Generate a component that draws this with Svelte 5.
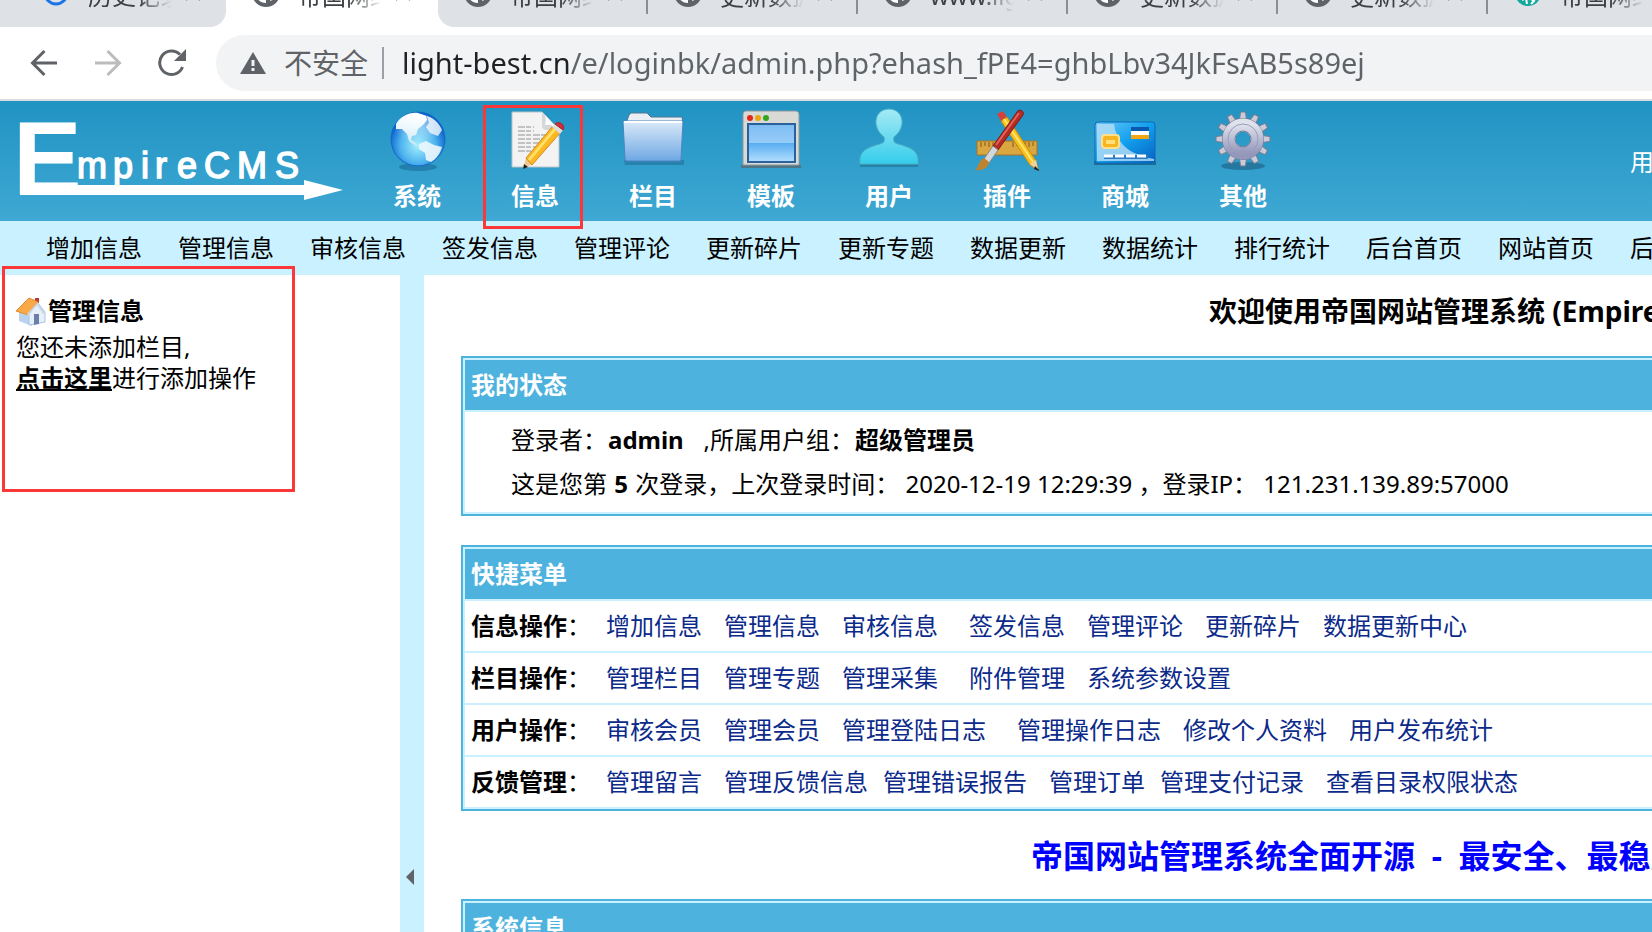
<script>
  const tabs = [
    { title: '历史记录', icon: 'history' },
    { title: '帝国网络', icon: 'globe', active: true },
    { title: '帝国网络', icon: 'globe' },
    { title: '更新数据', icon: 'globe' },
    { title: 'www.light', icon: 'globe' },
    { title: '更新数据', icon: 'globe' },
    { title: '更新数据', icon: 'globe' },
    { title: '帝国网络', icon: 'teal' }
  ]

  const menu = [
    { id: 'system', label: '系统' },
    { id: 'info', label: '信息' },
    { id: 'column', label: '栏目' },
    { id: 'template', label: '模板' },
    { id: 'user', label: '用户' },
    { id: 'plugin', label: '插件' },
    { id: 'shop', label: '商城' },
    { id: 'other', label: '其他' }
  ]

  const subnav = [
    '增加信息', '管理信息', '审核信息', '签发信息', '管理评论', '更新碎片', '更新专题',
    '数据更新', '数据统计', '排行统计', '后台首页', '网站首页', '后台地图'
  ]

  // gap says how far a link stands from the one before it
  const quick = [
    {
      name: '信息操作',
      links: [
        { text: '增加信息' }, { text: '管理信息' }, { text: '审核信息' },
        { text: '签发信息', gap: 'far' }, { text: '管理评论' }, { text: '更新碎片' },
        { text: '数据更新中心' }
      ]
    },
    {
      name: '栏目操作',
      links: [
        { text: '管理栏目' }, { text: '管理专题' }, { text: '管理采集' },
        { text: '附件管理', gap: 'far' }, { text: '系统参数设置' }
      ]
    },
    {
      name: '用户操作',
      links: [
        { text: '审核会员' }, { text: '管理会员' }, { text: '管理登陆日志' },
        { text: '管理操作日志', gap: 'far' }, { text: '修改个人资料' }, { text: '用户发布统计' }
      ]
    },
    {
      name: '反馈管理',
      links: [
        { text: '管理留言' }, { text: '管理反馈信息' }, { text: '管理错误报告', gap: 'near' },
        { text: '管理订单' }, { text: '管理支付记录', gap: 'near' }, { text: '查看目录权限状态' }
      ]
    }
  ]

  const teeth = Array.from({ length: 12 }, (_, i) => i * 30)

  let current = 'info'
  let url = 'light-best.cn/e/loginbk/admin.php?ehash_fPE4=ghbLbv34JkFsAB5s89ej'
</script>

<div class="page" lang="zh-CN">
  <div class="tabs">
    {#each tabs as tab}
      <div class="tab" class:active={tab.active}>
        <svg class="favicon" width="28" height="28" viewBox="0 0 28 28">
          {#if tab.icon === 'history'}
            <circle cx="14" cy="14" r="11" fill="none" stroke="#1a73e8" stroke-width="3" />
          {:else if tab.icon === 'teal'}
            <circle cx="14" cy="14" r="13" fill="#12a89d" />
            <path d="M8 21l4-2 1 6M17 20l3 2-3 3" stroke="#fff" stroke-width="2" fill="none" />
          {:else}
            <circle cx="14" cy="14" r="14" fill="#5f6368" />
            <path d="M4 14h6l4 5v5c-6 0-10-4-10-10zM18 22c1-4 4-4 4-9l3 1c0 4-3 7-7 8z" fill="#fff" />
          {/if}
        </svg>
        <span class="title">{tab.title}</span>
        <button class="close" type="button" aria-label="关闭">
          <svg width="16" height="16" viewBox="0 0 16 16">
            <path d="M1 1l14 14M15 1L1 15" stroke="#5f6368" stroke-width="2" />
          </svg>
        </button>
      </div>
    {/each}
  </div>

  <div class="toolbar">
    <button type="button" aria-label="后退">
      <svg width="28" height="28" viewBox="0 0 28 28" fill="none" stroke="#5f6368" stroke-width="3">
        <path d="M27 14H3M14.500 2L2.500 14l12 12" />
      </svg>
    </button>
    <button type="button" aria-label="前进" disabled>
      <svg width="28" height="28" viewBox="0 0 28 28" fill="none" stroke="#babcbe" stroke-width="3">
        <path d="M1 14h24M13.500 2l12 12-12 12" />
      </svg>
    </button>
    <button type="button" aria-label="刷新">
      <svg width="28" height="28" viewBox="0 0 28 28">
        <path d="M24.500 18A11.800 11.800 0 1 1 22 5.500" fill="none" stroke="#5f6368" stroke-width="3" />
        <path d="M28 0v12H16z" fill="#5f6368" />
      </svg>
    </button>
    <div class="address">
      <button class="security" type="button">
        <svg width="26" height="22" viewBox="0 0 26 22">
          <path d="M13 0l13 22H0z" fill="#5f6368" />
          <path d="M11.500 8h3v6h-3zM11.500 16h3v3h-3z" fill="#f1f3f4" />
        </svg>
        不安全
      </button>
      <input bind:value={url} aria-label="地址" spellcheck="false" />
    </div>
  </div>

  <header>
    <svg class="logo" width="358" height="120" viewBox="0 0 358 120" fill="#fff">
      <text x="13" y="93" font-size="103" font-weight="bold">E</text>
      <path d="M20 84h284v-5l39 10-39 10v-5H20z" />
      <text y="77" font-size="36" stroke="#fff" stroke-width="1.500" x="77 113 141 155 177 204 237 275">mpireCMS</text>
    </svg>

    <nav class="menu">
      {#each menu as item}
        <button
          type="button"
          class:current={item.id === current}
          on:click={() => (current = item.id)}
        >
          <svg width="64" height="64" viewBox="0 0 64 64">
            {#if item.id === 'system'}
              <defs>
                <radialGradient id="sea" cx="50%" cy="62%" r="55%">
                  <stop offset="0" stop-color="#a5f0fd" />
                  <stop offset="0.600" stop-color="#4cb2ee" />
                  <stop offset="1" stop-color="#0a5fcc" />
                </radialGradient>
                <linearGradient id="land" x2="0" y2="1">
                  <stop offset="0" stop-color="#fff" />
                  <stop offset="1" stop-color="#c3e6f8" />
                </linearGradient>
                <radialGradient id="shine" cx="50%" cy="0%" r="60%">
                  <stop offset="0" stop-color="#fff" stop-opacity="0.700" />
                  <stop offset="1" stop-color="#fff" stop-opacity="0" />
                </radialGradient>
              </defs>
              <ellipse cx="33" cy="59" rx="19" ry="4" fill="#1a6c9a" opacity="0.600" />
              <circle cx="33" cy="31" r="27" fill="url(#sea)" stroke="#1268c8" />
              <path d="M11 16c5-8 13-12 22-11l8 3 1 4-4 5-5 4-2 6-4 1-1 4 4 2 3 5-4-2-5-4-2-7-5-5-6 0z" fill="url(#land)" />
              <path d="M42 8c7 2 12 7 15 14l-4 6-8-3-4-6 3-4z" fill="#e4f1fb" opacity="0.850" />
              <path d="M34 36l7-3 8 4 8 2c-2 7-6 12-11 15l-5-2-1-7-6-4z" fill="#edf7fd" opacity="0.900" />
              <circle cx="33" cy="31" r="25" fill="url(#shine)" />
            {:else if item.id === 'info'}
              <path d="M9 4h30l17 18v37H9z" fill="#f3f3f3" stroke="#b9c3c8" />
              <path d="M39 4l17 18H43c-2 0-4-2-4-4z" fill="#d5d7d9" />
              <path d="M39 4c5 4 4 9 3 13 5-1 10 1 14 5z" fill="#fff" />
              <path d="M15 19h16M15 23h16M15 27h34M15 31h30M15 35h30M15 39h22M15 43h26" stroke="#c2c2c2" stroke-width="2" stroke-dasharray="7 1 5 2" />
              <path d="M20 61l3-11 6 6z" fill="#f0c890" />
              <path d="M20 61l1-5 4 3z" fill="#222" />
              <path d="M23 50L49 19l8 6-28 32z" fill="#fbb822" stroke="#d78a15" />
              <path d="M25 51l26-31 2 2-26 31z" fill="#ffe06a" />
              <path d="M49 19l3-3 8 6-3 4z" fill="#dedede" />
              <path d="M52 16c4-4 11 1 8 6z" fill="#c9303a" stroke="#a92630" />
            {:else if item.id === 'column'}
              <defs>
                <linearGradient id="folder" x2="0" y2="1">
                  <stop offset="0" stop-color="#dbe9f8" />
                  <stop offset="1" stop-color="#6ea8e4" />
                </linearGradient>
              </defs>
              <path d="M3 52h60v5H4z" fill="#1e678f" opacity="0.500" />
              <path d="M5 15l3-8 2-2h16l4 4h31l1 6z" fill="#e8eef3" stroke="#4b7696" />
              <path d="M2 13h60l-2 38c0 2-1 2-3 2H7c-2 0-3 0-3-2z" fill="url(#folder)" stroke="#4a85c2" />
              <path d="M3 14h58" stroke="#fff" stroke-width="2" />
            {:else if item.id === 'template'}
              <defs>
                <linearGradient id="screen" x2="0" y2="1">
                  <stop offset="0" stop-color="#7cbcf2" />
                  <stop offset="0.500" stop-color="#98ccf8" />
                  <stop offset="0.510" stop-color="#58aef2" />
                  <stop offset="1" stop-color="#b5dffd" />
                </linearGradient>
              </defs>
              <path d="M2 57h60v3H2z" fill="#4e7586" />
              <path d="M4 57V7c0-3 1-4 4-4h48c3 0 4 1 4 4v50z" fill="#d9d9d6" stroke="#8d9a9e" />
              <circle cx="11" cy="10" r="3" fill="#e0281b" />
              <circle cx="19" cy="10" r="3" fill="#efa30e" />
              <circle cx="27" cy="10" r="3" fill="#36a41b" />
              <rect x="9" y="16" width="47" height="38" fill="url(#screen)" stroke="#2b619b" stroke-width="2" />
            {:else if item.id === 'user'}
              <defs>
                <linearGradient id="person" x2="0" y2="1">
                  <stop offset="0" stop-color="#a5eaf4" />
                  <stop offset="1" stop-color="#35cdec" />
                </linearGradient>
              </defs>
              <path d="M3 55h58v4H3z" fill="#226f92" opacity="0.600" />
              <path d="M32 1c8 0 14 6 13 15-1 6-4 10-8 13-1 4 0 6 4 7 10 3 18 5 20 14v6H3v-6c2-9 10-11 20-14 4-1 5-3 4-7-4-3-7-7-8-13C18 7 24 1 32 1z" fill="url(#person)" stroke="#4ab0c4" />
            {:else if item.id === 'plugin'}
              <path d="M2 33h60v14H2z" fill="#d9a640" stroke="#a87524" />
              <path d="M6 34v5M10 34v4M14 34v5M18 34v4M22 34v5M38 34v5M42 34v4M46 34v5M50 34v4M54 34v5M58 34v4" stroke="#805717" />
              <path d="M22 6l6-3 4 6-6 4z" fill="#d4423e" />
              <path d="M26 13l6-4 29 44 2 9-8-5z" fill="#f8c01c" stroke="#c68a10" />
              <path d="M29 11l29 43" stroke="#ffe46c" stroke-width="2" />
              <path d="M55 56l6-4 2 10z" fill="#edd3a6" />
              <path d="M60 58l4 4v1l-5-2z" fill="#222" />
              <path d="M18 38L42 4c2-4 8-1 6 3L23 42z" fill="#b52a22" stroke="#801a18" />
              <path d="M21 37L44 5" stroke="#e2655a" stroke-width="2" />
              <path d="M18 38l5 4-9 13-5-4z" fill="#d5d8da" stroke="#868c90" />
              <path d="M9 50l5 4c0 5-6 9-14 8 4-3 3-9 9-12z" fill="#bd832f" />
            {:else if item.id === 'shop'}
              <defs>
                <linearGradient id="card" x2="1" y2="1">
                  <stop offset="0" stop-color="#6cc8f8" />
                  <stop offset="0.500" stop-color="#11a0ee" />
                  <stop offset="1" stop-color="#0860c0" />
                </linearGradient>
              </defs>
              <path d="M1 53h62v4H1z" fill="#14587f" opacity="0.700" />
              <rect x="2" y="14" width="60" height="41" rx="3" fill="url(#card)" stroke="#0a68bc" />
              <path d="M4 16h17C24 35 34 46 61 51v2H4z" fill="#b6ddf5" opacity="0.800" />
              <rect x="9" y="27" width="17" height="13" rx="3" fill="#f8b51f" stroke="#fde08a" stroke-width="2" />
              <path d="M13 32h9v4h-9z" fill="#ffe07d" />
              <path d="M38 19h18v4H38z" fill="#0c58b0" />
              <path d="M38 23h18v4H38z" fill="#fff" />
              <path d="M38 27h18v4H38z" fill="#f2a616" />
              <path d="M11 49h44" stroke="#2b7ac6" stroke-width="4" />
              <path d="M11 48h44" stroke="#fff" stroke-width="3" stroke-dasharray="9 2" />
            {:else}
              <defs>
                <linearGradient id="metal" x2="0" y2="1">
                  <stop offset="0" stop-color="#dfe1ec" />
                  <stop offset="1" stop-color="#9397bb" />
                </linearGradient>
              </defs>
              <ellipse cx="32" cy="58" rx="22" ry="4" fill="#1d5e80" opacity="0.600" />
              {#each teeth as angle}
                <path d="M28.500 12l1-8h5l1 8z" fill="#c9cbda" stroke="#767b90" transform="rotate({angle} 32 31)" />
              {/each}
              <circle cx="32" cy="31" r="17" fill="none" stroke="#767b90" stroke-width="8" />
              <circle cx="32" cy="31" r="14" fill="none" stroke="url(#metal)" stroke-width="13" />
              <circle cx="32" cy="31" r="15" fill="none" stroke="#9a9eb6" />
              <circle cx="32" cy="31" r="8" fill="none" stroke="#777c94" stroke-width="1" />
            {/if}
          </svg>
          <span>{item.label}</span>
        </button>
      {/each}
    </nav>

    <div class="account">用户</div>
  </header>

  <nav class="subnav">
    {#each subnav as item}
      <a href="#top">{item}</a>
    {/each}
  </nav>

  <div class="body">
    <aside>
      <h2>
        <svg width="30" height="30" viewBox="0 0 30 30">
          <path d="M19 2h4v8h-4z" fill="#c0392b" />
          <path d="M3 16l13 5v9L3 25z" fill="#b9d3ee" />
          <path d="M13 29V17l9-10 7 9v10z" fill="#e6f0fa" stroke="#a9c4e2" />
          <path d="M18 18h5v10l-5 1z" fill="#6b7fa8" />
          <path d="M0 15L13 2l9 4-10 13z" fill="#f9a947" stroke="#e58b2d" />
          <path d="M22 6l7 11-2 1-6-9-9 11-1-2z" fill="#c9d7e8" />
        </svg>
        管理信息
      </h2>
      <p>您还未添加栏目,<br /><a href="#add">点击这里</a>进行添加操作</p>
    </aside>

    <button class="splitter" type="button" aria-label="收起">
      <svg width="8" height="16" viewBox="0 0 8 16"><path d="M8 0v16L0 8z" fill="#606468" /></svg>
    </button>

    <main>
      <h1>欢迎使用帝国网站管理系统 (EmpireCMS)</h1>

      <section class="panel">
        <h3>我的状态</h3>
        <div class="status">
          <p>登录者：<b>admin</b>&nbsp;&nbsp; ,所属用户组：<b>超级管理员</b></p>
          <p>这是您第 <b>5</b> 次登录，上次登录时间：&nbsp;2020-12-19 12:29:39&nbsp;，登录IP：&nbsp;121.231.139.89:57000</p>
        </div>
      </section>

      <section class="panel">
        <h3>快捷菜单</h3>
        {#each quick as row}
          <div class="row">
            <span class="name"><b>{row.name}</b>：</span>
            {#each row.links as link}
              <a class={link.gap} href="#quick">{link.text}</a>
            {/each}
          </div>
        {/each}
      </section>

      <p class="slogan">帝国网站管理系统全面开源 &nbsp;-&nbsp; 最安全、最稳定</p>

      <section class="panel">
        <h3>系统信息</h3>
      </section>
    </main>
  </div>
</div>

<style>
  :global(body) {
    margin: 0;
    background: #fff;
  }

  .page {
    display: flex;
    flex-direction: column;
    height: 100vh;
    overflow: hidden;
    font-family: "Noto Sans", "Noto Sans CJK SC", sans-serif;
    font-size: 24px;
    line-height: 32px;
    color: #000;
    white-space: nowrap;
  }

  button {
    padding: 0;
    border: 0;
    background: none;
    font: inherit;
    color: inherit;
  }

  svg {
    display: block;
    flex: none;
  }

  h1, h2, h3, p {
    margin: 0;
  }

  /* browser chrome */
  .tabs {
    display: flex;
    flex: none;
    align-items: flex-end;
    height: 27px;
    overflow: hidden;
  }

  .tab {
    display: flex;
    flex: none;
    align-items: center;
    box-sizing: border-box;
    width: 210px;
    height: 68px;
    padding-left: 26px;
    background: #dee1e6;
    color: #3c4043;
  }

  .tab:first-child {
    width: 226px;
    padding-left: 42px;
    border-bottom-right-radius: 16px;
  }

  .tab.active {
    width: 212px;
    background: #fff;
  }

  .tab.active + .tab {
    border-bottom-left-radius: 16px;
  }

  .tab:nth-child(n + 3)::after {
    content: "";
    width: 2px;
    height: 42px;
    margin-left: auto;
    background: #8b8f94;
  }

  .title {
    width: 84px;
    margin: 0 13px 0 18px;
    padding-top: 6px;
    overflow: hidden;
    -webkit-mask-image: linear-gradient(to right, #000 60%, transparent);
    mask-image: linear-gradient(to right, #000 60%, transparent);
  }

  .toolbar {
    display: flex;
    flex: none;
    align-items: center;
    gap: 36px;
    height: 72px;
    padding-left: 30px;
    border-bottom: 2px solid #d9dce0;
  }

  .address {
    display: flex;
    flex: 1;
    align-items: center;
    height: 56px;
    margin-left: -6px;
    padding-left: 24px;
    border-radius: 28px 0 0 28px;
    background: #f1f3f4;
    font-size: 28px;
  }

  .security {
    display: flex;
    align-items: center;
    gap: 18px;
    padding-right: 14px;
    border-right: 2px solid #9aa0a6;
    color: #5f6368;
  }

  .address input {
    flex: 1;
    min-width: 0;
    height: 54px;
    margin-left: 18px;
    padding: 0 0 2px;
    border: 0;
    outline: 0;
    font: inherit;
    font-size: 29px;
    /* host name darker than the path */
    background: linear-gradient(to right, #202124 169px, #5f6368 169px);
    -webkit-background-clip: text;
    background-clip: text;
    color: transparent;
  }

  /* admin header */
  header {
    display: flex;
    flex: none;
    height: 120px;
    background: linear-gradient(#2093c3, #3fa8d3);
    color: #fff;
  }

  .logo {
    font-family: "Liberation Sans", Arial, sans-serif;
  }

  .menu {
    display: flex;
    flex: none;
  }

  .menu button {
    position: relative;
    display: flex;
    flex-direction: column;
    align-items: center;
    gap: 8px;
    box-sizing: border-box;
    width: 118px;
    padding-top: 7px;
    font-weight: bold;
    cursor: pointer;
  }

  .menu .current::after {
    content: "";
    position: absolute;
    inset: 4px 11px -8px 7px;
    border: 3px solid #fc3738;
  }

  .account {
    width: 22px;
    margin: 45px 0 0 auto;
    overflow: hidden;
  }

  .subnav {
    display: flex;
    flex: none;
    gap: 36px;
    padding: 11px 0 11px 46px;
    background: #c9f1ff;
    overflow: hidden;
  }

  .subnav a {
    flex: none;
    color: #000;
    text-decoration: none;
  }

  .body {
    display: flex;
    flex: 1;
    min-height: 0;
  }

  aside {
    position: relative;
    flex: none;
    box-sizing: border-box;
    width: 400px;
    padding: 20px 16px;
  }

  aside::after {
    content: "";
    position: absolute;
    top: -9px;
    left: 2px;
    box-sizing: border-box;
    width: 293px;
    height: 226px;
    border: 3px solid #fc3738;
    pointer-events: none;
  }

  aside h2 {
    display: flex;
    align-items: center;
    gap: 2px;
    margin-bottom: 4px;
    font-size: 24px;
  }

  aside p {
    line-height: 31px;
  }

  aside a {
    color: #000;
    font-weight: bold;
  }

  .splitter {
    display: flex;
    flex: none;
    align-items: flex-end;
    justify-content: center;
    width: 24px;
    padding: 0 4px 47px 0;
    background: #c9f1ff;
  }

  main {
    flex: 1;
    min-width: 0;
    padding: 20px 0 0 37px;
    overflow: hidden;
  }

  h1 {
    margin-bottom: 29px;
    padding-left: 748px;
    font-size: 28px;
    line-height: 32px;
  }

  .panel {
    display: flex;
    flex-direction: column;
    gap: 2px;
    margin-bottom: 29px;
    padding: 2px 0 2px 2px;
    border: 2px solid #4eb2de;
    border-right: 0;
    background: #c9f1ff;
  }

  .panel h3 {
    padding: 9px 6px;
    background: #4eb2de;
    color: #fff;
    font-size: 24px;
  }

  .status {
    padding: 6px 46px;
    background: #fff;
    line-height: 44px;
  }

  .status b {
    margin: 0 1px;
  }

  .row {
    display: flex;
    padding: 9px 6px;
    background: #fff;
  }

  .row a {
    margin-left: 22px;
    color: #0b2a8a;
    text-decoration: none;
  }

  .row a.far {
    margin-left: 31px;
  }

  .row .name + a,
  .row a.near {
    margin-left: 15px;
  }

  .slogan {
    margin-bottom: 27px;
    padding-left: 570px;
    color: #0000ff;
    font-size: 32px;
    font-weight: bold;
  }
</style>
